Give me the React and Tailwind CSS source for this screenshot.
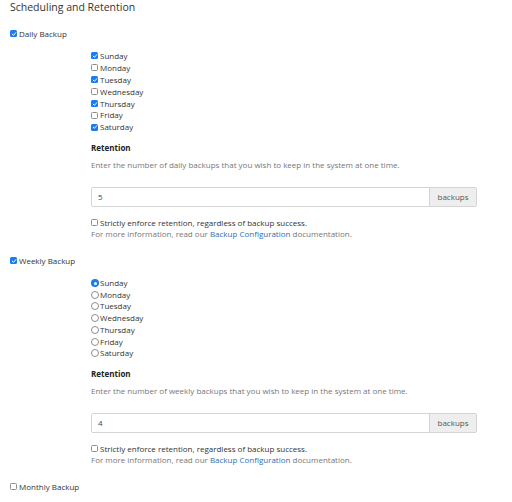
import React from "react";

const days = ["Sunday", "Monday", "Tuesday", "Wednesday", "Thursday", "Friday", "Saturday"];

function Box({ checked }) {
  if (checked) {
    return (
      <span className="inline-flex items-center justify-center w-[7px] h-[7px] rounded-[1.5px] bg-[#1a7cf0] shrink-0">
        <svg viewBox="0 0 8 8" className="w-[6px] h-[6px]">
          <path d="M1.6 4.2 L3.3 5.8 L6.4 2.2" fill="none" stroke="#fff" strokeWidth="1.3" strokeLinecap="round" strokeLinejoin="round" />
        </svg>
      </span>
    );
  }
  return <span className="inline-block w-[7px] h-[7px] rounded-[1.5px] border border-[#8e8e8e] bg-white shrink-0" />;
}

function Radio({ checked }) {
  if (checked) {
    return (
      <span className="inline-flex items-center justify-center w-[8px] h-[8px] rounded-full bg-[#1a7cf0] shrink-0">
        <span className="w-[3px] h-[3px] rounded-full bg-white" />
      </span>
    );
  }
  return <span className="inline-block w-[8px] h-[8px] rounded-full border border-[#8e8e8e] bg-white shrink-0" />;
}

function Retention({ period, value }) {
  return (
    <div className="flex flex-col">
      <div className="mt-[10px] text-[8px] font-bold text-[#222] leading-[10px]">Retention</div>
      <div className="mt-[7px] text-[8px] text-[#777] leading-[10px]">
        Enter the number of {period} backups that you wish to keep in the system at one time.
      </div>
      <div className="mt-[17px] flex h-[20px] w-[386px] rounded-[2px] border border-[#d4d4d4] overflow-hidden">
        <div className="flex-1 flex items-center pl-[6px] text-[8px] text-[#444] bg-white">{value}</div>
        <div className="w-[47px] flex items-center justify-center border-l border-[#d4d4d4] bg-[#eeeeee] text-[8px] text-[#555]">
          backups
        </div>
      </div>
      <div className="mt-[10px] flex items-center gap-[2px] text-[8px] text-[#333] leading-[11px]">
        <Box checked={false} />
        <span>Strictly enforce retention, regardless of backup success.</span>
      </div>
      <div className="mt-[0px] text-[8px] text-[#777] leading-[11px]">
        For more information, read our <span className="text-[#2f6eb5]">Backup Configuration</span> documentation.
      </div>
    </div>
  );
}

export default function App() {
  return (
    <div className="w-[512px] h-[502px] bg-white pl-[10px] font-['Open_Sans',sans-serif] overflow-hidden">
      <div className="text-[10.5px] text-[#333] leading-[15px]">Scheduling and Retention</div>

      <div className="mt-[13px] flex items-center gap-[2px] text-[8px] text-[#333] leading-[11px]">
        <Box checked />
        <span>Daily Backup</span>
      </div>
      <div className="ml-[81px] mt-[11px] flex flex-col">
        {days.map((d, i) => (
          <div key={d} className="flex items-center gap-[2px] h-[11.9px] text-[8px] text-[#333]">
            <Box checked={i % 2 === 0} />
            <span>{d}</span>
          </div>
        ))}
        <Retention period="daily" value="5" />
      </div>

      <div className="mt-[16px] flex items-center gap-[2px] text-[8px] text-[#333] leading-[11px]">
        <Box checked />
        <span>Weekly Backup</span>
      </div>
      <div className="ml-[81px] mt-[11px] flex flex-col">
        {days.map((d, i) => (
          <div key={d} className="flex items-center gap-[1px] h-[11.7px] text-[8px] text-[#333]">
            <Radio checked={i === 0} />
            <span>{d}</span>
          </div>
        ))}
        <Retention period="weekly" value="4" />
      </div>

      <div className="mt-[16px] flex items-center gap-[2px] text-[8px] text-[#333] leading-[11px]">
        <Box checked={false} />
        <span>Monthly Backup</span>
      </div>
    </div>
  );
}
